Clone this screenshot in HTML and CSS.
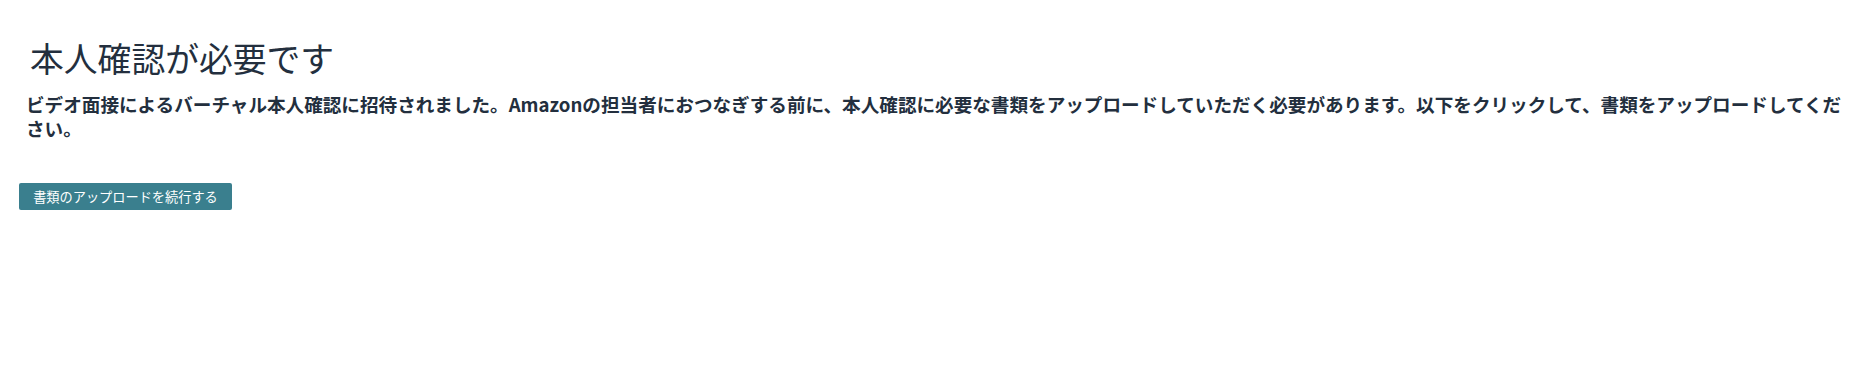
FILE: index.html
```html
<!DOCTYPE html>
<html lang="ja">
<head>
<meta charset="utf-8">
<title>本人確認が必要です</title>
<link rel="stylesheet" href="styles.css">
</head>
<body>
<main class="page">
  <h1 class="title">本人確認が必要です</h1>
  <p class="message">ビデオ面接によるバーチャル本人確認に招待されました。Amazonの担当者におつなぎする前に、本人確認に必要な書類をアップロードしていただく必要があります。以下をクリックして、書類をアップロードしてください。</p>
  <div class="actions">
    <button class="btn-primary" type="button">書類のアップロードを続行する</button>
  </div>
</main>
</body>
</html>
```
FILE: styles.css
```css
html, body {
  margin: 0;
  background: #ffffff;
}
body {
  font-family: "Noto Sans CJK JP", "Noto Sans", sans-serif;
  color: #232f3e;
}
.page {
  padding: 0 10px 0 19px;
}
.title {
  margin: 34px 0 0 11px;
  font-size: 33.8px;
  font-weight: 400;
  line-height: 48px;
}
.message {
  margin: 10px 0 0 7px;
  font-size: 18.6px;
  font-weight: 700;
  line-height: 23.5px;
}
.actions {
  margin-top: 44px;
}
.btn-primary {
  display: inline-block;
  width: 213px;
  height: 27px;
  padding: 0;
  border: 0;
  border-radius: 2px;
  background: #3a7f8e;
  color: #ffffff;
  font-family: "Noto Sans CJK JP", sans-serif;
  font-size: 13.2px;
  line-height: 27px;
}
```
